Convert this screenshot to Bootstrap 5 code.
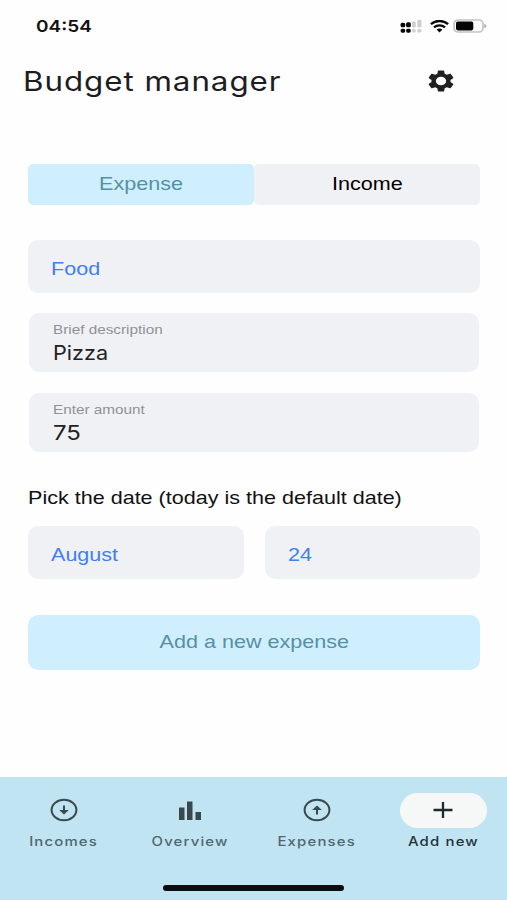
<!DOCTYPE html>
<html lang="en">
<head>
<meta charset="utf-8">
<meta name="viewport" content="width=device-width, initial-scale=1">
<title>Budget manager</title>
<link href="https://cdn.jsdelivr.net/npm/bootstrap@5.3.0/dist/css/bootstrap.min.css" rel="stylesheet">
<style>
body { font-family: "Liberation Sans", Arial, sans-serif; font-size: 18.5px; line-height: 24px; color: #111; background: #fefefe; }
.screen { height: 900px; }
.inter { font-family: Inter, sans-serif; }
/* wide lettering: stretched horizontally, anchored left (wl) or centred (wc) */
.wl, .wc { display: inline-block; white-space: nowrap; transform: scaleX(var(--sx, 1.165)); }
.wl { transform-origin: left center; }
.status { height: 52px; padding: 0 20px 0 36px; }
.clock { font-size: 16.5px; font-weight: 600; --sx: 1.15; }
.heading { height: 58px; padding: 0 53px 0 22.5px; }
.heading h1 { font-size: 26.5px; line-height: 32px; font-weight: 400; color: #1d1d1f; letter-spacing: .8px; --sx: 1.183; }
.main-form { padding: 54px 27px 0 28px; }
.tab-item { height: 41px; border-radius: 5px; border: 0; background: #f0f1f5; padding: 0 0 1px; }
.sky { background: #d0effe; color: #5590a5; }
.pick { height: 53px; border-radius: 10px; background: #f0f1f5; color: #3f7ff0; padding: 4px 23px 0; }
.category { margin-top: 35px; }
.entry { height: 59px; border-radius: 10px; background: #f0f1f5; padding: 8px 24px 0 24px; margin: 21px 1px 0 1px; }
.category + .entry { margin-top: 20px; }
.entry label { font-size: 12.8px; line-height: 18px; color: #919196; --sx: 1.195; }
.entry .value { font-size: 20px; line-height: 26px; color: #222; margin-top: 1px; --sx: 1.08; }
.entry .wide { --sx: 1.2; }
.date-hint { margin-top: 34px; }
.date-row { gap: 21px; margin-top: 16px; }
.add-btn { height: 55px; border-radius: 10px; border: 0; margin-top: 36px; padding: 0 0 1px; }
.bottom { height: 123px; background: #c0e4f1; }
.bottom a { width: 126.6px; padding-top: 16px; font-size: 12.8px; line-height: 18px; font-weight: 500; color: #50666f; letter-spacing: 1px; text-decoration: none; }
.bottom a.current { color: #22323a; }
.pill { width: 87px; height: 35px; border-radius: 18px; margin-bottom: 5px; padding-bottom: 1px; }
.current .pill { background: #f6f8f7; }
.home-bar { width: 181px; height: 6px; border-radius: 3px; background: #0b0d0e; margin-bottom: 9px; }
</style>
</head>
<body>
<div class="screen d-flex flex-column overflow-hidden">
  <div class="status d-flex align-items-center justify-content-between">
    <span class="clock inter wl">04:54</span>
    <div class="d-flex align-items-center">
      <svg width="22" height="14" viewBox="0 0 22 14">
        <g fill="#050505"><rect x=".6" y="3.8" width="4.600" height="4.500" rx="1.500"/><rect x="6.100" y="3.300" width="4.700" height="5" rx="1.500"/><rect x=".6" y="9.700" width="4.600" height="4" rx="1.600"/><rect x="6.100" y="9.700" width="4.700" height="4" rx="1.600"/></g>
        <g fill="#cfcfcf"><rect x="12" y="2.200" width="3.800" height="6.400" rx="1.500"/><rect x="17.300" y=".8" width="4.200" height="7.800" rx="1.500"/><rect x="12" y="9.900" width="3.800" height="3.600" rx="1.500"/><rect x="17.300" y="9.900" width="4.200" height="3.600" rx="1.500"/></g>
      </svg>
      <svg class="ms-2 me-1" width="19" height="13" viewBox="0 0 19 13" fill="none" stroke="#080808">
        <path d="M.9 4.200C5.600-.1 13.400-.1 18.100 4.200" stroke-width="2.400"/><path d="M4 7.400C7 4.600 12 4.600 15 7.400" stroke-width="2.200"/><path d="M6.600 9.600C8.200 8.200 10.800 8.200 12.400 9.600L9.500 12.400Z" fill="#080808" stroke="none"/>
      </svg>
      <svg width="34" height="14" viewBox="0 0 34 14">
        <rect x="1" y="1" width="29" height="12" rx="4" fill="#fff" stroke="#c4c4c4" stroke-width="1.700"/><rect x="3" y="2.600" width="17.300" height="8.800" rx="1.800" fill="#050505"/><path d="M31.300 5v4.200Q33.500 8.500 33.500 7T31.300 5Z" fill="#aaa"/>
      </svg>
    </div>
  </div>
  <header class="heading d-flex align-items-center justify-content-between">
    <h1 class="inter wl mb-0">Budget manager</h1>
    <svg width="26" height="22" viewBox="2.200 2 19.600 20" preserveAspectRatio="none" fill="#202022"><path d="M19.140 12.940c.04-.3.060-.61.060-.94 0-.32-.02-.64-.07-.94l2.030-1.580c.18-.14.23-.41.120-.61l-1.920-3.320c-.12-.22-.37-.29-.59-.22l-2.390.96c-.5-.38-1.030-.7-1.620-.94l-.36-2.540c-.04-.24-.24-.41-.48-.41h-3.840c-.24 0-.43.17-.47.410l-.36 2.540c-.59.24-1.130.57-1.620.94l-2.390-.96c-.22-.08-.47 0-.59.220L2.740 8.870c-.12.210-.08.470.120.610l2.030 1.580c-.05.300-.09.630-.09.940s.020.640.070.940l-2.030 1.580c-.18.140-.23.410-.12.610l1.920 3.320c.12.220.37.290.59.220l2.390-.96c.5.380 1.030.700 1.620.940l.360 2.540c.05.240.240.410.480.410h3.840c.240 0 .440-.170.470-.410l.360-2.540c.590-.240 1.130-.560 1.620-.940l2.390.960c.220.080.470 0 .590-.220l1.920-3.320c.120-.220.070-.470-.120-.610l-2.010-1.580zM12 15.900a3.900 3.900 0 1 1 0-7.800 3.900 3.900 0 0 1 0 7.800z"/></svg>
  </header>
  <main class="main-form flex-grow-1">
    <div class="row g-0">
      <div class="col"><button class="tab-item sky w-100"><span class="wc">Expense</span></button></div>
      <div class="col"><button class="tab-item w-100"><span class="wc">Income</span></button></div>
    </div>
    <div class="pick category d-flex align-items-center"><span class="wl">Food</span></div>
    <div class="entry"><label class="d-block"><span class="wl">Brief description</span></label><div class="value inter"><span class="wl">Pizza</span></div></div>
    <div class="entry"><label class="d-block"><span class="wl">Enter amount</span></label><div class="value wide inter"><span class="wl">75</span></div></div>
    <div class="date-hint"><span class="wl">Pick the date (today is the default date)</span></div>
    <div class="date-row d-flex">
      <div class="pick col d-flex align-items-center"><span class="wl">August</span></div>
      <div class="pick col d-flex align-items-center"><span class="wl">24</span></div>
    </div>
    <button class="add-btn sky w-100"><span class="wc">Add a new expense</span></button>
  </main>
  <nav class="bottom inter d-flex flex-column justify-content-between align-items-center">
    <div class="d-flex">
      <a href="#" class="d-flex flex-column align-items-center"><span class="pill d-flex align-items-center justify-content-center"><svg width="28" height="24" viewBox="0 0 28 24" fill="none" stroke="#39484e"><ellipse cx="14" cy="12" rx="12.400" ry="10.200" stroke-width="2"/><path d="M14 7.500v7" stroke-width="2"/><path d="M9.200 12h9.600L14 16.400Z" fill="#39484e" stroke="none"/></svg></span><span class="wc">Incomes</span></a>
      <a href="#" class="d-flex flex-column align-items-center"><span class="pill d-flex align-items-center justify-content-center"><svg width="22" height="19" viewBox="0 0 22 19" fill="#39484e"><path d="M0 6.500h5.500V19H0zM8 .5h5.500V19H8zM16.500 11H22v8h-5.500z"/></svg></span><span class="wc">Overview</span></a>
      <a href="#" class="d-flex flex-column align-items-center"><span class="pill d-flex align-items-center justify-content-center"><svg width="28" height="24" viewBox="0 0 28 24" fill="none" stroke="#39484e"><ellipse cx="14" cy="12" rx="12.400" ry="10.200" stroke-width="2"/><path d="M14 16.500v-7" stroke-width="2"/><path d="M9.200 12h9.600L14 7.600Z" fill="#39484e" stroke="none"/></svg></span><span class="wc">Expenses</span></a>
      <a href="#" class="current d-flex flex-column align-items-center"><span class="pill d-flex align-items-center justify-content-center"><svg width="20" height="16" viewBox="0 0 20 16" stroke="#1c2b30" stroke-width="2.300"><path d="M.5 8h19M10 0v16"/></svg></span><span class="wc">Add new</span></a>
    </div>
    <div class="home-bar"></div>
  </nav>
</div>
<script src="https://cdn.jsdelivr.net/npm/bootstrap@5.3.0/dist/js/bootstrap.bundle.min.js"></script>
</body>
</html>
